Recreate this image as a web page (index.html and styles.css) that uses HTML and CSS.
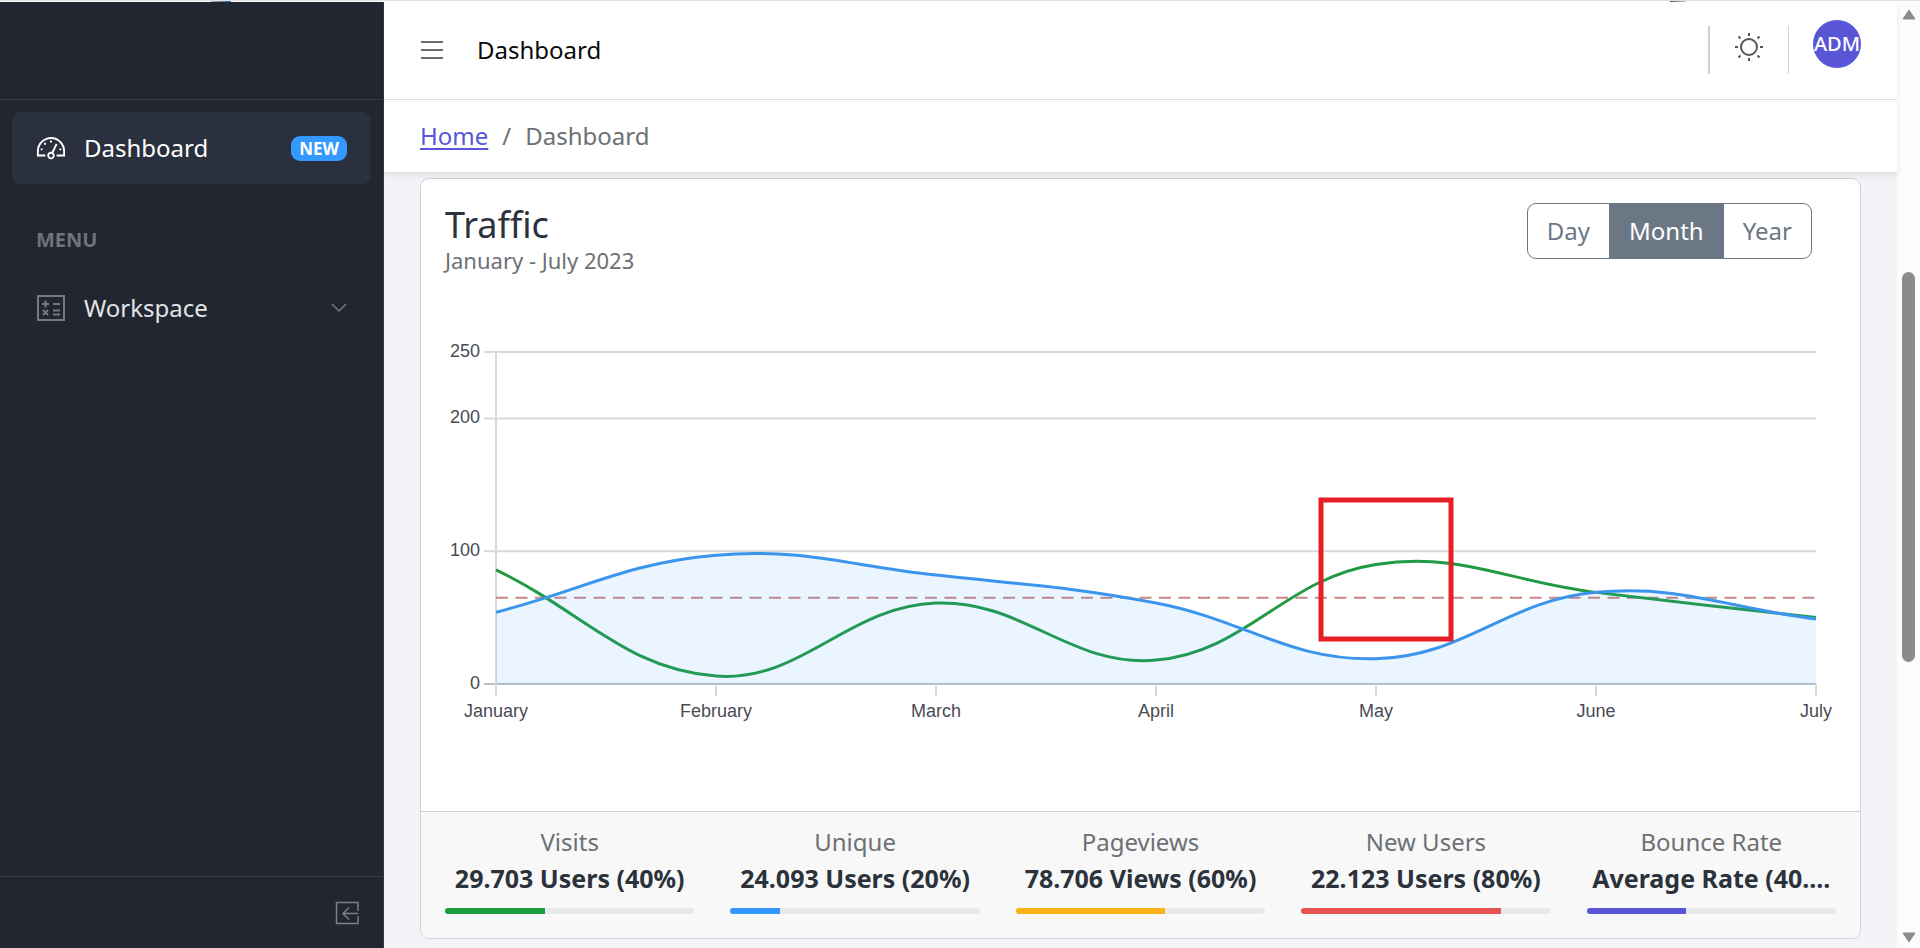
FILE: index.html
```html
<!DOCTYPE html>
<html lang="en">
<head>
<meta charset="utf-8">
<meta name="viewport" content="width=device-width, initial-scale=1">
<title>Dashboard</title>
<link rel="stylesheet" href="styles.css">
</head>
<body>
<div class="page-edge" aria-hidden="true"><span class="edge-blue"></span><span class="edge-dark"></span></div>
<div class="app">
  <aside class="sidebar">
    <div class="sidebar-brand"></div>
    <nav class="sidebar-nav">
      <a class="nav-item active" href="#dashboard">
        <svg class="nav-icon" viewBox="0 0 512 512" fill="currentColor" aria-hidden="true">
          <path d="M425.706 142.294A240 240 0 0 0 16 312v88h144v-32H48v-56c0-114.691 93.309-208 208-208s208 93.309 208 208v56H352v32h144v-88a238.432 238.432 0 0 0-70.294-169.706Z"/>
          <path d="M80 264h32v32H80zM240 128h32v32h-32zM136 168h32v32h-32zM400 264h32v32h-32z"/>
          <path d="m297.222 335.1 69.2-144.173-28.85-13.848-69.183 144.135a64.141 64.141 0 1 0 28.833 13.886ZM256 416a32 32 0 1 1 32-32 32.036 32.036 0 0 1-32 32Z"/>
        </svg>
        <span class="nav-label">Dashboard</span>
        <span class="badge">NEW</span>
      </a>
      <h2 class="nav-title">MENU</h2>
      <a class="nav-item" href="#workspace">
        <svg class="nav-icon muted" viewBox="0 0 30 30" fill="none" stroke="currentColor" stroke-width="2" aria-hidden="true">
          <path d="M2 3h26v24H2z"/>
          <path d="M6 11h7M9.500 7.500v7M17 11h7M17 17.500h7M17 21.500h7M7 17l5 5M12 17l-5 5"/>
        </svg>
        <span class="nav-label">Workspace</span>
        <svg class="chevron" viewBox="0 0 16 10" fill="none" stroke="currentColor" stroke-width="1.500" aria-hidden="true"><path d="m1 1 7 7 7-7"/></svg>
      </a>
    </nav>
    <div class="sidebar-footer">
      <button class="icon-button collapse" type="button" aria-label="Collapse sidebar">
        <svg viewBox="0 0 24 24" fill="none" stroke="currentColor" stroke-width="1.500" aria-hidden="true">
          <path d="M23 10V1.500H1.500v21H23V15M23 12.500H8M14 6.500l-6 6 6 6"/>
        </svg>
      </button>
    </div>
  </aside>

  <div class="content">
    <header class="header">
      <div class="topbar">
        <button class="icon-button menu" type="button" aria-label="Toggle menu">
          <svg viewBox="0 0 22 20" fill="none" stroke="currentColor" stroke-width="2" aria-hidden="true"><path d="M0 2h22M0 10h22M0 18h22"/></svg>
        </button>
        <a class="topbar-title" href="#dashboard">Dashboard</a>
        <div class="topbar-tools">
          <span class="divider wide"></span>
          <button class="icon-button theme" type="button" aria-label="Theme">
            <svg viewBox="0 0 28 28" fill="none" stroke="currentColor" stroke-width="2" aria-hidden="true">
              <circle cx="14" cy="14" r="8"/>
              <path d="M14 0v3M14 25v3M0 14h3M25 14h3M3.500 3.500l2 2M22.500 22.500l2 2M3.500 24.500l2-2M22.500 5.500l2-2"/>
            </svg>
          </button>
          <span class="divider"></span>
          <button class="avatar" type="button">ADM</button>
        </div>
      </div>
      <nav class="breadcrumb" aria-label="Breadcrumb">
        <a href="#home">Home</a><span>/</span><span>Dashboard</span>
      </nav>
    </header>

    <main class="main">
      <section class="card">
        <div class="card-body">
          <div class="card-head">
            <div>
              <h1 class="card-title">Traffic</h1>
              <p class="card-subtitle">January - July 2023</p>
            </div>
            <div class="button-group" role="group" aria-label="Period">
              <button type="button">Day</button>
              <button type="button" class="selected" aria-pressed="true">Month</button>
              <button type="button">Year</button>
            </div>
          </div>
          <svg class="chart" id="traffic-chart" role="img" aria-label="Traffic from January to July"></svg>
        </div>
        <div class="card-footer">
          <div class="stat"><span class="stat-label">Visits</span><strong class="stat-value">29.703 Users (40%)</strong><div class="progress"><div class="bar green" style="width:40%"></div></div></div>
          <div class="stat"><span class="stat-label">Unique</span><strong class="stat-value">24.093 Users (20%)</strong><div class="progress"><div class="bar blue" style="width:20%"></div></div></div>
          <div class="stat"><span class="stat-label">Pageviews</span><strong class="stat-value">78.706 Views (60%)</strong><div class="progress"><div class="bar yellow" style="width:60%"></div></div></div>
          <div class="stat"><span class="stat-label">New Users</span><strong class="stat-value">22.123 Users (80%)</strong><div class="progress"><div class="bar red" style="width:80%"></div></div></div>
          <div class="stat"><span class="stat-label">Bounce Rate</span><strong class="stat-value">Average Rate (40....</strong><div class="progress"><div class="bar violet" style="width:40%"></div></div></div>
        </div>
      </section>
    </main>
  </div>

  <div class="scrollbar" aria-hidden="true">
    <svg class="scroll-arrow" viewBox="0 0 14 11"><path d="M7 1 13 10H1Z"/></svg>
    <div class="scroll-track"><div class="scroll-thumb"></div></div>
    <svg class="scroll-arrow" viewBox="0 0 14 11"><path d="M7 10 1 1h12Z"/></svg>
  </div>
</div>
<script src="chart.js"></script>
</body>
</html>
```
FILE: styles.css
```css
* { box-sizing: border-box; }

body {
  margin: 0;
  min-height: 100vh;
  display: flex;
  flex-direction: column;
  font-family: "Noto Sans", "Open Sans", sans-serif;
  font-size: 24px;
  line-height: 36px;
  color: #2b323b;
  background: #f3f4f7;
}

h1, h2, p { margin: 0; font-weight: 400; }
a { color: inherit; text-decoration: none; }
button { font: inherit; color: inherit; background: none; border: 0; padding: 0; }
svg { display: block; flex: none; }

.page-edge {
  position: relative;
  height: 2px;
  background: #fff;
  border-top: 1px solid #dfe1e4;
}
.edge-blue, .edge-dark { position: absolute; top: 0; height: 1px; }
.edge-blue { left: 11%; width: 20px; background: linear-gradient(90deg, #aaa, #2a6fb0); }
.edge-dark { left: 87%; width: 16px; background: linear-gradient(90deg, #555, #ccc); }

.app { flex: 1; display: flex; }

/* Sidebar */
.sidebar {
  width: 384px;
  flex: none;
  display: flex;
  flex-direction: column;
  background: #222630;
  border-right: 1px solid #323741;
  color: #e3e4e6;
}
.sidebar-brand { height: 98px; border-bottom: 1px solid #363b45; }
.sidebar-nav { flex: 1; padding: 12px; }
.nav-item {
  display: flex;
  align-items: center;
  height: 72px;
  padding: 0 24px;
  border-radius: 9px;
}
.nav-item.active { background: #2a303d; color: #fff; }
.nav-icon { width: 30px; height: 30px; margin-right: 18px; }
.nav-icon.muted { color: #757982; }
.nav-label { flex: 1; }
.badge {
  padding: 0 8px;
  border-radius: 9px;
  background: #39f;
  color: #fff;
  font-size: 17px;
  line-height: 25px;
  font-weight: 700;
}
.nav-title {
  padding: 38px 24px 14px;
  font-size: 20px;
  font-weight: 700;
  color: #6f737b;
}
.chevron { width: 16px; height: 10px; color: #757982; }
.sidebar-footer {
  height: 72px;
  display: flex;
  align-items: center;
  justify-content: flex-end;
  padding: 0 24px;
  border-top: 1px solid #363b45;
}
.collapse { color: #7b7f88; }
.collapse svg { width: 24px; height: 24px; }

/* Header */
.content { flex: 1; min-width: 0; display: flex; flex-direction: column; }
.header {
  position: relative;
  background: #fff;
  border-bottom: 1px solid #dbdddf;
  box-shadow: 0 3px 6px rgba(8, 10, 12, 0.08);
}
.topbar {
  display: flex;
  align-items: center;
  height: 98px;
  padding: 0 36px 2px 37px;
  border-bottom: 1px solid #dbdddf;
}
.menu { color: #6b6b6b; }
.menu svg { width: 22px; height: 20px; }
.topbar-title { margin-left: 34px; color: #080a0c; }
.topbar-tools { margin-left: auto; display: flex; align-items: center; }
.divider { width: 1px; height: 48px; background: #cfd1d3; }
.divider.wide { width: 2px; }
.theme { margin: 0 25px 6px; color: #555; }
.theme svg { width: 28px; height: 28px; }
.avatar {
  width: 48px;
  height: 48px;
  margin: 0 0 12px 24px;
  border-radius: 50%;
  background: #5856d6;
  color: #fff;
  font-size: 20px;
  font-weight: 500;
  display: flex;
  align-items: center;
  justify-content: center;
}
.breadcrumb {
  display: flex;
  align-items: center;
  gap: 14px;
  height: 72px;
  padding: 0 36px;
  color: #6d7074;
}
.breadcrumb a { color: #5856d6; text-decoration: underline; text-underline-offset: 3px; }

/* Traffic card */
.main { flex: 1; padding: 5px 36px 9px; }
.card {
  background: #fff;
  border: 1px solid #cfd2d6;
  border-radius: 9px;
  overflow: hidden;
}
.card-body { padding: 24px; }
.card-head { display: flex; justify-content: space-between; align-items: flex-start; }
.card-title { font-size: 36px; line-height: 43px; }
.card-subtitle { font-size: 22px; line-height: 28px; color: #6d7074; }
.button-group { display: flex; margin-right: 24px; }
.button-group button {
  padding: 9px 19px;
  border: 1px solid #6b7785;
  color: #6b7785;
}
.button-group button + button { margin-left: -1px; }
.button-group button:first-child { border-radius: 9px 0 0 9px; }
.button-group button:last-child { border-radius: 0 9px 9px 0; }
.button-group .selected { background: #6b7785; color: #fff; }

.chart {
  width: 100%;
  height: 449px;
  margin-top: 64px;
  overflow: visible;
  font-family: "Liberation Sans", Arial, sans-serif;
  font-size: 18px;
}
.chart text { fill: #484c54; }
.grid { stroke: #d8d9db; stroke-width: 2; }
.baseline { stroke: #b9c0c8; stroke-width: 2; }
.line { fill: none; stroke-width: 3; }
.line-green { stroke: #219a42; }
.line-blue { stroke: #3c95ec; }
.area { fill: #39f; fill-opacity: 0.1; }
.limit { stroke: #c98585; stroke-width: 2; stroke-dasharray: 12 7.5; }
.marker { fill: none; stroke: #e61e25; stroke-width: 5; }

.card-footer {
  display: grid;
  grid-template-columns: repeat(5, minmax(0, 1fr));
  gap: 36px;
  padding: 12px 24px 24px;
  background: #f8f8f8;
  border-top: 1px solid #cfd2d6;
}
.stat { display: flex; flex-direction: column; text-align: center; }
.stat-label { color: #6d7074; }
.stat-value {
  font-size: 25px;
  font-weight: 700;
  white-space: nowrap;
  overflow: hidden;
  text-overflow: ellipsis;
}
.progress { height: 6px; margin-top: 12px; border-radius: 3px; background: #e7e9ed; overflow: hidden; }
.bar { height: 100%; }
.green { background: #1b9e3e; }
.blue { background: #39f; }
.yellow { background: #f9b115; }
.red { background: #e55353; }
.violet { background: #5856d6; }

/* Scrollbar */
.scrollbar {
  width: 23px;
  flex: none;
  display: flex;
  flex-direction: column;
  align-items: center;
  padding: 7px 0 5px;
  background: #fcfcfc;
}
.scroll-arrow { width: 14px; height: 11px; fill: #8b8b8b; stroke: #8b8b8b; stroke-linejoin: round; }
.scroll-track { flex: 1; display: flex; flex-direction: column; }
.scroll-track::before { content: ""; flex: 252; }
.scroll-track::after { content: ""; flex: 270; }
.scroll-thumb { flex: 390; width: 13px; border-radius: 7px; background: #8b8b8b; }
```
FILE: chart.js
```js
(function () {
  const svg = document.getElementById('traffic-chart');
  const months = ['January', 'February', 'March', 'April', 'May', 'June', 'July'];
  const blue = [54, 97, 82, 61, 19, 69, 49];
  const green = [86, 6, 61, 18, 90, 69, 50];
  const limit = 65;
  const ticks = [0, 100, 200, 250];
  const left = 51, right = 20, top = 14, bottom = 346, max = 250;

  function curve(points) {
    const tension = 0.4;
    const clamp = v => Math.min(bottom, Math.max(top, v));
    const handles = points.map((p, i) => {
      const a = points[i - 1] || p, b = points[i + 1] || p;
      const before = Math.hypot(p[0] - a[0], p[1] - a[1]);
      const after = Math.hypot(b[0] - p[0], b[1] - p[1]);
      const f = tension * before / (before + after);
      const g = tension * after / (before + after);
      const dx = b[0] - a[0], dy = b[1] - a[1];
      return {
        prev: [p[0] - f * dx, clamp(p[1] - f * dy)],
        next: [p[0] + g * dx, clamp(p[1] + g * dy)]
      };
    });
    let d = 'M' + points[0];
    for (let i = 1; i < points.length; i++) {
      d += 'C' + handles[i - 1].next + ' ' + handles[i].prev + ' ' + points[i];
    }
    return d;
  }

  function draw() {
    const end = svg.clientWidth - right;
    const x = i => left + i * (end - left) / (months.length - 1);
    const y = v => bottom - v * (bottom - top) / max;
    const line = (cls, x1, y1, x2, y2) =>
      `<line class="${cls}" x1="${x1}" y1="${y1}" x2="${x2}" y2="${y2}"/>`;
    let out = '';
    ticks.forEach(t => {
      out += line(t ? 'grid' : 'baseline', left - 12, y(t), end, y(t));
      out += `<text x="${left - 16}" y="${y(t) + 5}" text-anchor="end">${t}</text>`;
    });
    out += line('grid', left, top, left, bottom + 12);
    months.forEach((m, i) => {
      out += line('grid', x(i), bottom, x(i), bottom + 12);
      out += `<text x="${x(i)}" y="${bottom + 33}" text-anchor="middle">${m}</text>`;
    });
    const b = curve(blue.map((v, i) => [x(i), y(v)]));
    const g = curve(green.map((v, i) => [x(i), y(v)]));
    out += line('limit', left, y(limit), end, y(limit));
    out += `<path class="line line-green" d="${g}"/>`;
    out += `<path class="area" d="${b}V${bottom}H${left}Z"/>`;
    out += `<path class="line line-blue" d="${b}"/>`;
    out += `<rect class="marker" x="${x(4) - 55}" y="${bottom - 184}" width="130" height="139"/>`;
    svg.innerHTML = out;
  }

  draw();
  window.addEventListener('resize', draw);
})();
```
